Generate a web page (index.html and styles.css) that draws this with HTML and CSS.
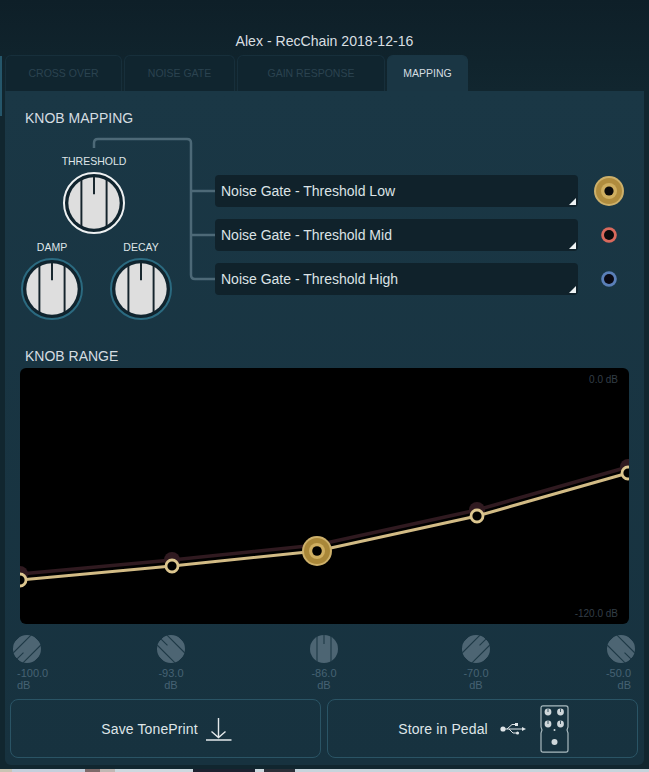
FILE: index.html
```html
<!DOCTYPE html>
<html lang="en">
<head>
    <meta charset="UTF-8">
    <meta name="viewport" content="width=device-width, initial-scale=1.0">
    <title>TonePrint Editor</title>
    <link rel="stylesheet" href="styles.css">
</head>
<body>

<svg class="defs" width="0" height="0">
    <symbol id="knob-face" viewBox="-32 -32 64 64">
        <circle r="26.5" fill="currentColor"/>
        <path d="M-13 -24V24M13 -24V24M0 -27V-9" fill="none" stroke="var(--knob-line)" stroke-width="2"/>
    </symbol>
    <symbol id="small-knob" viewBox="-14 -14 28 28">
        <circle r="14" fill="currentColor"/>
        <path d="M-7 -13V13M7 -13V13M0 -14V-5" fill="none" stroke="#1e3946" stroke-width="1.1"/>
    </symbol>
</svg>

<div class="app">
    <div class="stub"></div>
    <h1 class="title">Alex - RecChain 2018-12-16</h1>

    <nav class="tabs">
        <div class="tab tab-cross">CROSS OVER</div>
        <div class="tab tab-noise">NOISE GATE</div>
        <div class="tab tab-gain">GAIN RESPONSE</div>
        <div class="tab tab-map active">MAPPING</div>
    </nav>

    <main class="panel">
        <svg class="wires" viewBox="5 91 639 230" width="639" height="230">
            <path d="M94 148V143Q94 139 98 139H187Q191 139 191 143V275Q191 279 195 279H215M191 191H215M191 235H215"/>
        </svg>

        <h2 class="heading">KNOB MAPPING</h2>
        <section class="mapping">
            <div class="knobs">
                <div class="knob knob-main selected">
                    <span class="knob-label">THRESHOLD</span>
                    <span class="knob-dial"><svg width="62" height="62"><use href="#knob-face"/></svg></span>
                </div>
                <div class="knob">
                    <span class="knob-label">DAMP</span>
                    <span class="knob-dial"><svg width="62" height="62"><use href="#knob-face"/></svg></span>
                </div>
                <div class="knob">
                    <span class="knob-label">DECAY</span>
                    <span class="knob-dial"><svg width="62" height="62"><use href="#knob-face"/></svg></span>
                </div>
            </div>
            <div class="targets">
                <div class="target">
                    <div class="dropdown">Noise Gate - Threshold Low</div>
                    <svg class="jack" width="30" height="30" viewBox="-15 -15 30 30">
                        <circle r="15" fill="#cdb06a"/>
                        <circle r="13" fill="#b08c3e"/>
                        <circle r="8" fill="#cfae60"/>
                        <circle r="4.6" fill="#0a0a0c"/>
                    </svg>
                </div>
                <div class="target">
                    <div class="dropdown">Noise Gate - Threshold Mid</div>
                    <svg class="jack" width="30" height="30" viewBox="-15 -15 30 30">
                        <circle r="7.8" fill="#d9695c"/>
                        <circle r="5" fill="#0a0a0c"/>
                    </svg>
                </div>
                <div class="target">
                    <div class="dropdown">Noise Gate - Threshold High</div>
                    <svg class="jack" width="30" height="30" viewBox="-15 -15 30 30">
                        <circle r="7.8" fill="#5a7fb8"/>
                        <circle r="5" fill="#0a0a14"/>
                    </svg>
                </div>
            </div>
        </section>

        <h2 class="heading heading-range">KNOB RANGE</h2>
        <div class="graph">
            <svg width="609" height="256" viewBox="20 368 609 256">
                <g fill="#301a20">
                    <circle cx="20" cy="574" r="8"/>
                    <circle cx="172" cy="560" r="8"/>
                    <circle cx="477" cy="510" r="8"/>
                    <circle cx="628" cy="467" r="8"/>
                </g>
                <polyline points="20,574 172,560 317,545 477,510 628,467" fill="none" stroke="#301a20" stroke-width="3.5"/>
                <polyline points="20,580 172,566 317,551 477,516 628,473" fill="none" stroke="#d2bb85" stroke-width="3"/>
                <g fill="#000" stroke="#dcc68f" stroke-width="2.8">
                    <circle cx="20" cy="580" r="6"/>
                    <circle cx="172" cy="566" r="6"/>
                    <circle cx="477" cy="516" r="6"/>
                    <circle cx="628" cy="473" r="6"/>
                </g>
                <circle cx="317" cy="551" r="15" fill="#cdb06a"/>
                <circle cx="317" cy="551" r="13" fill="#a98739"/>
                <circle cx="317" cy="551" r="8" fill="#cfae60"/>
                <circle cx="317" cy="551" r="4.8" fill="#000"/>
            </svg>
            <span class="scale scale-top">0.0 dB</span>
            <span class="scale scale-bottom">-120.0 dB</span>
        </div>

        <div class="steps">
            <div class="step step-first">
                <svg class="turn-1" width="28" height="28"><use href="#small-knob"/></svg>
                <span class="step-value">-100.0<br>dB</span>
            </div>
            <div class="step">
                <svg class="turn-2" width="28" height="28"><use href="#small-knob"/></svg>
                <span class="step-value">-93.0<br>dB</span>
            </div>
            <div class="step">
                <svg width="28" height="28"><use href="#small-knob"/></svg>
                <span class="step-value">-86.0<br>dB</span>
            </div>
            <div class="step">
                <svg class="turn-4" width="28" height="28"><use href="#small-knob"/></svg>
                <span class="step-value">-70.0<br>dB</span>
            </div>
            <div class="step step-last">
                <svg class="turn-5" width="28" height="28"><use href="#small-knob"/></svg>
                <span class="step-value">-50.0<br>dB</span>
            </div>
        </div>

        <div class="actions">
            <button class="action">
                Save TonePrint
                <svg class="icon-save" width="26" height="24" viewBox="0 0 26 24">
                    <path d="M12.5 1V20M5.5 14.5L12.5 20.5L19.5 14.5M0 23H25.5" fill="none" stroke="#e4e9eb" stroke-width="1.4"/>
                </svg>
            </button>
            <button class="action">
                Store in Pedal
                <svg class="icon-usb" width="27" height="14" viewBox="0 0 27 14">
                    <circle cx="3" cy="7" r="2.6" fill="#dfe5e8"/>
                    <path d="M3 7H23M7 7L12 2.5H15M9 7L13 11H16" fill="none" stroke="#dfe5e8" stroke-width="1"/>
                    <rect x="15" y="1" width="3" height="3" fill="#dfe5e8"/>
                    <circle cx="17.5" cy="11" r="1.6" fill="#dfe5e8"/>
                    <path d="M26 7L22 5V9Z" fill="#dfe5e8"/>
                </svg>
                <svg class="icon-pedal" width="29" height="48" viewBox="0 0 29 48">
                    <path d="M3 .8H26Q28 .8 28 3V22L27 25L28 28V45Q28 47.2 26 47.2H3Q1 47.2 1 45V28L2 25L1 22V3Q1 .8 3 .8Z" fill="none" stroke="#a9babf" stroke-width="1.2"/>
                    <g fill="#cfd7db">
                        <circle cx="8" cy="7" r="3.4"/>
                        <circle cx="20.5" cy="7" r="3.4"/>
                        <circle cx="8" cy="19" r="3.4"/>
                        <circle cx="20.5" cy="19" r="3.4"/>
                        <circle cx="14.5" cy="25" r="1"/>
                        <circle cx="14.5" cy="37" r="3"/>
                    </g>
                    <path d="M8 3.6V7M20.5 3.6V7M8 15.6V19M20.5 15.6V19" stroke="#3d5663" stroke-width="1"/>
                </svg>
            </button>
        </div>
    </main>

    <div class="backdrop"></div>
</div>

</body>
</html>
```

FILE: styles.css
```css
body {
    margin: 0;
    padding: 0;
    background-color: #0f222c;
    font-family: 'Liberation Sans', Arial, sans-serif;
}

.defs {
    display: block;
    height: 0;
}

.app {
    position: relative;
    width: 649px;
    height: 772px;
    overflow: hidden;
    background: linear-gradient(#0e1f28, #11262f 90px);
}

.stub {
    position: absolute;
    left: 0;
    top: 56px;
    width: 2px;
    height: 60px;
    background-color: #25566a;
}

.title {
    margin: 0;
    height: 55px;
    box-sizing: border-box;
    padding-top: 33px;
    text-align: center;
    font-size: 14.1px;
    line-height: 16px;
    font-weight: normal;
    color: #d9dfe2;
}

.tabs {
    display: flex;
    gap: 2px;
    height: 36px;
    margin-left: 5px;
}

.tab {
    display: flex;
    align-items: center;
    justify-content: center;
    box-sizing: border-box;
    padding-bottom: 2px;
    border: 1px solid #172f3b;
    border-bottom: none;
    border-radius: 6px 6px 0 0;
    background-color: #10252f;
    font-size: 10.5px;
    color: #2b4350;
}

.tab-cross { width: 117px; }
.tab-noise { width: 111px; }
.tab-gain { width: 148px; }
.tab-map { width: 81px; }

.tab.active {
    border-color: #1a3644;
    background-color: #1a3644;
    color: #d5dde1;
}

.panel {
    position: relative;
    box-sizing: border-box;
    width: 639px;
    height: 674px;
    margin-left: 5px;
    padding-top: 19px;
    border-radius: 0 0 6px 6px;
    background: linear-gradient(#1a3745, #17323f);
}

.wires {
    position: absolute;
    left: 0;
    top: 0;
}

.wires path {
    fill: none;
    stroke: #4d6977;
    stroke-width: 2.5;
}

.heading {
    margin: 0 0 0 20px;
    font-size: 14px;
    line-height: 16px;
    font-weight: normal;
    color: #d5dde1;
}

.heading-range {
    margin-top: 28px;
}

.mapping {
    position: relative;
    display: flex;
    margin-top: 28px;
}

.knobs {
    display: grid;
    grid-template-columns: 62px 62px;
    column-gap: 27px;
    row-gap: 6px;
    width: 151px;
    height: 166px;
    margin-left: 16px;
}

.knob {
    display: flex;
    flex-direction: column;
    align-items: center;
    gap: 6px;
    width: 62px;
}

.knob-main {
    grid-column: 1 / 3;
    margin-left: 42px;
}

.knob-label {
    position: relative;
    top: 1px;
    font-size: 10.5px;
    line-height: 12px;
    white-space: nowrap;
    color: #dfe5e8;
}

.knob-dial {
    display: block;
    box-sizing: border-box;
    width: 62px;
    height: 62px;
    border: 2px solid #2b6a80;
    border-radius: 50%;
    background-color: #10242e;
    color: #dedede;
    --knob-line: #14232b;
}

.knob-dial svg {
    display: block;
    margin: -2px;
}

.selected .knob-dial {
    border-color: #eef1f2;
}

.targets {
    display: flex;
    flex-direction: column;
    gap: 12px;
    margin: 21px 0 0 43px;
}

.target {
    display: flex;
    align-items: center;
    gap: 16px;
}

.dropdown {
    position: relative;
    box-sizing: border-box;
    width: 363px;
    height: 32px;
    padding-left: 6px;
    border-radius: 4px;
    background-color: #10222b;
    font-size: 14px;
    line-height: 32px;
    color: #dce3e6;
}

.dropdown::after {
    content: '';
    position: absolute;
    right: 2px;
    bottom: 2px;
    width: 7px;
    height: 7px;
    background-color: #eef2f3;
    clip-path: polygon(100% 0, 100% 100%, 0 100%);
}

.jack {
    display: block;
}

.graph {
    position: relative;
    width: 609px;
    height: 256px;
    margin: 4px 0 0 15px;
    border-radius: 6px;
    overflow: hidden;
    background-color: #000;
}

.graph svg {
    display: block;
}

.scale {
    position: absolute;
    right: 11px;
    font-size: 10px;
    line-height: 12px;
    color: #333e47;
}

.scale-top { top: 6px; }
.scale-bottom { bottom: 4px; }

.steps {
    display: grid;
    grid-template-columns: 144px 153px 152px 145px 28px;
    margin: 11px 0 0 8px;
}

.step {
    display: flex;
    flex-direction: column;
    align-items: center;
    width: 28px;
}

.step svg {
    display: block;
    color: #4d6573;
}

.step-value {
    margin-top: 4px;
    font-size: 11px;
    line-height: 12px;
    text-align: center;
    white-space: nowrap;
    color: #466273;
}

.step-first {
    align-items: flex-start;
}

.step-first .step-value {
    margin-left: 4px;
    text-align: left;
}

.step-last {
    align-items: flex-end;
}

.step-last .step-value {
    margin-right: 4px;
    text-align: right;
}

.turn-1 { transform: rotate(-135deg); }
.turn-2 { transform: rotate(-45deg); }
.turn-4 { transform: rotate(45deg); }
.turn-5 { transform: rotate(135deg); }

.actions {
    display: flex;
    gap: 6px;
    margin: 8px 0 0 5px;
}

.action {
    display: flex;
    align-items: center;
    justify-content: center;
    box-sizing: border-box;
    width: 311px;
    height: 59px;
    padding: 0 0 0 2px;
    border: 1.5px solid #2a5465;
    border-radius: 8px;
    background: none;
    font-family: inherit;
    font-size: 14px;
    letter-spacing: 0.12px;
    color: #dfe5e8;
}

.icon-save {
    margin-left: 8px;
}

.icon-usb {
    margin-left: 12px;
}

.icon-pedal {
    margin-left: 13px;
}

.backdrop {
    height: 3px;
    margin-top: 4px;
    background: linear-gradient(90deg, #c9c4b4 0 12px, #c4cfdc 12px 85px, #7d6a6a 85px 100px, #c0b8b4 100px 115px, #cdd8df 115px 193px, #1c2230 193px 255px, #cdd8df 255px 264px, #2b2f38 264px 295px, #c7d4dc 295px);
}
```
